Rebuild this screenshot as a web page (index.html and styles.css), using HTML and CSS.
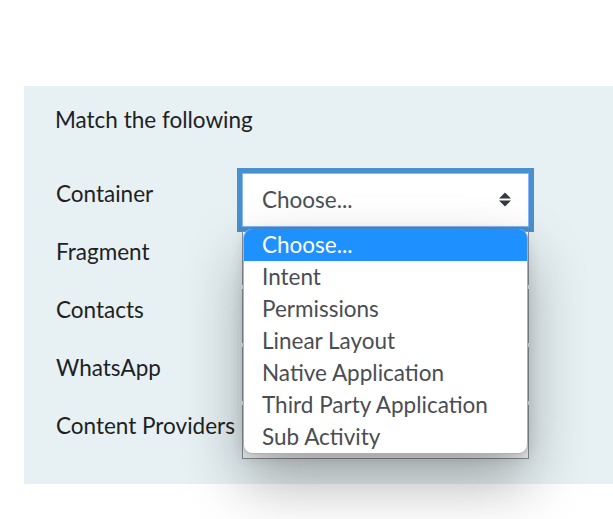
FILE: index.html
```html
<!DOCTYPE html>
<html lang="en">
<head>
<meta charset="utf-8">
<title>Match the following</title>
<link rel="stylesheet" href="styles.css">
</head>
<body>
<div class="page">
  <div class="panel">
    <div class="prompt">Match the following</div>
    <div class="rows">
      <div class="row">
        <div class="label">Container</div>
        <div class="select focused">
          <span class="value">Choose...</span>
          <svg class="caret" width="12" height="15" viewBox="0 0 12 15"><path d="M0 6.5 L6 0.5 L12 6.5 Z M0 8.5 L12 8.5 L6 14.5 Z" fill="#343a40"/></svg>
        </div>
      </div>
      <div class="row">
        <div class="label">Fragment</div>
        <div class="select"></div>
      </div>
      <div class="row">
        <div class="label">Contacts</div>
        <div class="select"></div>
      </div>
      <div class="row">
        <div class="label">WhatsApp</div>
        <div class="select"></div>
      </div>
      <div class="row">
        <div class="label">Content Providers</div>
        <div class="select"></div>
      </div>
      <ul class="menu">
        <li class="active">Choose...</li>
        <li>Intent</li>
        <li>Permissions</li>
        <li>Linear Layout</li>
        <li>Native Application</li>
        <li>Third Party Application</li>
        <li>Sub Activity</li>
      </ul>
    </div>
  </div>
</div>
</body>
</html>
```
FILE: styles.css
```css
html, body {
  margin: 0;
  padding: 0;
  background: #ffffff;
  overflow: hidden;
}
body {
  font-family: Lato, "Open Sans", sans-serif;
  font-size: 22.5px;
  color: #1d2125;
  min-height: 519px;
}
.page {
  padding: 86px 0 0 24px;
}
.panel {
  background: #e7f1f3;
  height: 398px;
  box-sizing: border-box;
  padding: 19px 0 0 31px;
}
.prompt {
  line-height: 30px;
  margin-bottom: 38px;
}
.rows {
  position: relative;
  display: flex;
  flex-direction: column;
  gap: 4px;
}
.row {
  display: grid;
  grid-template-columns: 187px 287px;
  height: 54px;
}
.label {
  line-height: 30px;
  padding-top: 6px;
  padding-left: 1px;
}
.select {
  box-sizing: border-box;
  height: 54px;
  border: 1px solid #8f959e;
  background: #ffffff;
  display: flex;
  align-items: center;
  justify-content: space-between;
  padding: 0 17px 0 19px;
}
.select.focused {
  border-color: #86b7fe;
  outline: 5px solid #4a90cd;
}
.value {
  color: #495057;
  margin-top: -1px;
}
.caret {
  display: block;
  margin-top: -1px;
}
.menu {
  position: absolute;
  z-index: 2;
  left: 188px;
  top: 56px;
  width: 285px;
  margin: 0;
  padding: 0;
  list-style: none;
  background: #ffffff;
  border: 1px solid #b0b0b0;
  border-top: none;
  box-sizing: border-box;
  border-radius: 9px;
  overflow: hidden;
  box-shadow: 0 28px 60px rgba(0, 0, 0, 0.32), 0 4px 14px rgba(0, 0, 0, 0.12);
}
.menu li {
  height: 32px;
  line-height: 31px;
  padding-left: 18px;
  color: #4a4d52;
}
.menu li.active {
  background: #1e90ff;
  color: #ffffff;
}
```
